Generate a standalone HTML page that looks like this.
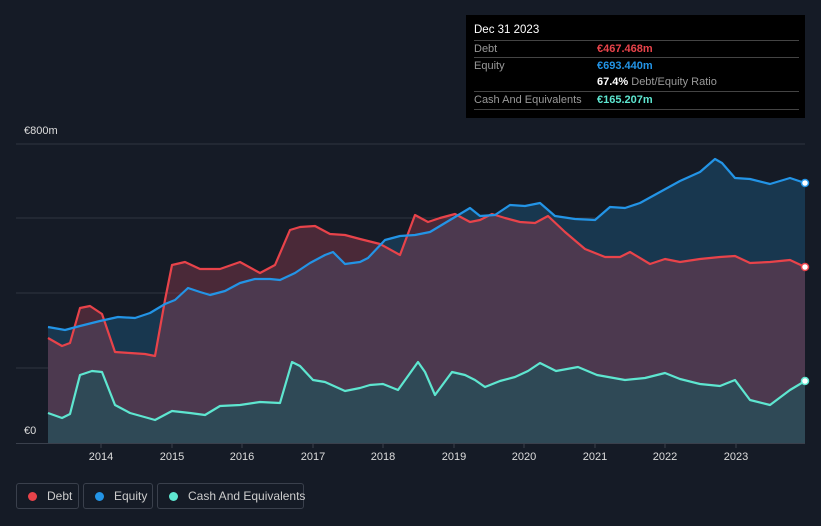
<!DOCTYPE html><html><head><meta charset="utf-8"><style>
body{margin:0;width:821px;height:526px;background:#151b26;font-family:"Liberation Sans",sans-serif;overflow:hidden;position:relative}
.t{position:absolute;left:466px;top:15px;width:339px;height:103px;background:#000;color:#fff;font-size:11px}
.r{position:absolute;left:8px;width:325px;border-top:1px solid #444;height:17px;line-height:17px}
.l{color:#999;position:absolute;left:0}.v{position:absolute;left:123px;font-weight:bold}
.ax{position:absolute;color:#ddd;font-size:11px}
.lg{position:absolute;top:483px;height:26px;border:1px solid #3a404c;border-radius:3px;color:#ccc;font-size:12px;line-height:24px;box-sizing:border-box;white-space:nowrap}
.lg i{display:inline-block;width:9px;height:9px;border-radius:50%;margin:0 10px 0 11px;vertical-align:-1px}
</style></head><body>
<div class="t">
<div style="position:absolute;left:8px;top:9px;font-size:11.5px">Dec 31 2023</div>
<div class="r" style="top:25px"><span class="l">Debt</span><span class="v" style="color:#e8434a">€467.468m</span></div>
<div class="r" style="top:42px"><span class="l">Equity</span><span class="v" style="color:#2394e6">€693.440m</span></div>
<div class="r" style="top:59px;border-top:none"><span class="v">67.4% <span style="color:#999;font-weight:normal">Debt/Equity Ratio</span></span></div>
<div class="r" style="top:76px"><span class="l">Cash And Equivalents</span><span class="v" style="color:#5ee6d0">€165.207m</span></div>
<div class="r" style="top:94px;height:0"></div>
</div>
<div class="ax" style="left:24px;top:125px">€800m</div>
<svg width="821" height="526" style="position:absolute;left:0;top:0">
<g stroke="#2e3440" stroke-width="1"><line x1="16" x2="805" y1="144" y2="144"/><line x1="16" x2="805" y1="218" y2="218"/><line x1="16" x2="805" y1="293" y2="293"/><line x1="16" x2="805" y1="368" y2="368"/></g>
<polygon fill="#18374f" points="48,443 48,327 65,330 80,326 100,321 118,317 135,318 150,313 165,304 175,300 188,288 200,292 210,295 225,291 240,283 255,279 270,279 280,280 295,273 310,263 325,255 333,252 345,264 360,262 368,258 385,240 400,236 415,235 430,232 445,223 460,214 470,208 480,216 495,215 510,205 525,206 540,203 555,216 575,219 595,220 610,207 625,208 640,203 660,192 680,181 700,172 715,159 722,163 735,178 750,179 770,184 790,178 805,183 805,443"/>
<polygon fill="rgba(140,60,80,0.45)" points="48,443 48,338 62,346 70,343 80,308 90,306 102,314 115,352 130,353 145,354 155,356 165,300 172,265 185,262 200,269 220,269 240,262 260,273 275,265 290,230 300,227 315,226 330,234 345,235 360,239 380,244 400,255 415,215 428,222 440,218 455,214 470,222 480,220 492,214 505,218 520,222 535,223 548,216 565,232 585,249 605,257 620,257 630,252 650,264 665,259 680,262 700,259 720,257 735,256 750,263 770,262 790,260 805,267 805,443"/>
<polygon fill="rgba(40,78,88,0.8)" points="48,443 48,413 62,418 70,414 80,375 92,371 102,372 115,405 130,413 148,418 155,420 172,411 190,413 205,415 220,406 240,405 260,402 280,403 292,362 300,366 313,380 325,382 345,391 360,388 370,385 383,384 398,390 418,362 425,372 435,395 452,372 465,375 475,380 485,387 500,381 515,377 528,371 540,363 556,371 578,367 597,375 625,380 645,378 665,373 680,379 700,384 720,386 735,380 750,400 770,405 790,390 805,381 805,443"/>
<g fill="none" stroke-width="2.2" stroke-linejoin="round">
<polyline stroke="#e8434a" points="48,338 62,346 70,343 80,308 90,306 102,314 115,352 130,353 145,354 155,356 165,300 172,265 185,262 200,269 220,269 240,262 260,273 275,265 290,230 300,227 315,226 330,234 345,235 360,239 380,244 400,255 415,215 428,222 440,218 455,214 470,222 480,220 492,214 505,218 520,222 535,223 548,216 565,232 585,249 605,257 620,257 630,252 650,264 665,259 680,262 700,259 720,257 735,256 750,263 770,262 790,260 805,267"/>
<polyline stroke="#2394e6" points="48,327 65,330 80,326 100,321 118,317 135,318 150,313 165,304 175,300 188,288 200,292 210,295 225,291 240,283 255,279 270,279 280,280 295,273 310,263 325,255 333,252 345,264 360,262 368,258 385,240 400,236 415,235 430,232 445,223 460,214 470,208 480,216 495,215 510,205 525,206 540,203 555,216 575,219 595,220 610,207 625,208 640,203 660,192 680,181 700,172 715,159 722,163 735,178 750,179 770,184 790,178 805,183"/>
<polyline stroke="#5ee6d0" points="48,413 62,418 70,414 80,375 92,371 102,372 115,405 130,413 148,418 155,420 172,411 190,413 205,415 220,406 240,405 260,402 280,403 292,362 300,366 313,380 325,382 345,391 360,388 370,385 383,384 398,390 418,362 425,372 435,395 452,372 465,375 475,380 485,387 500,381 515,377 528,371 540,363 556,371 578,367 597,375 625,380 645,378 665,373 680,379 700,384 720,386 735,380 750,400 770,405 790,390 805,381"/>
</g>
<circle cx="805" cy="267" r="3.5" fill="#fff" stroke="#e8434a" stroke-width="1.5"/>
<circle cx="805" cy="183" r="3.5" fill="#fff" stroke="#2394e6" stroke-width="1.5"/>
<circle cx="805" cy="381" r="3.5" fill="#fff" stroke="#5ee6d0" stroke-width="1.5"/>
<rect x="16" y="423" width="32" height="20" fill="#151b26"/>
<line x1="16" x2="805" y1="443.5" y2="443.5" stroke="#3a404c"/>
<g stroke="#3a404c"><line x1="101" x2="101" y1="443" y2="448"/><line x1="172" x2="172" y1="443" y2="448"/><line x1="242" x2="242" y1="443" y2="448"/><line x1="313" x2="313" y1="443" y2="448"/><line x1="383" x2="383" y1="443" y2="448"/><line x1="454" x2="454" y1="443" y2="448"/><line x1="524" x2="524" y1="443" y2="448"/><line x1="595" x2="595" y1="443" y2="448"/><line x1="665" x2="665" y1="443" y2="448"/><line x1="736" x2="736" y1="443" y2="448"/></g>
<g fill="#ddd" font-size="11" font-family="Liberation Sans" text-anchor="middle"><text x="101" y="460">2014</text><text x="172" y="460">2015</text><text x="242" y="460">2016</text><text x="313" y="460">2017</text><text x="383" y="460">2018</text><text x="454" y="460">2019</text><text x="524" y="460">2020</text><text x="595" y="460">2021</text><text x="665" y="460">2022</text><text x="736" y="460">2023</text></g>
</svg>
<div class="ax" style="left:24px;top:425px">€0</div>
<div class="lg" style="left:16px;width:63px"><i style="background:#e8434a"></i>Debt</div>
<div class="lg" style="left:83px;width:70px"><i style="background:#2394e6"></i>Equity</div>
<div class="lg" style="left:157px;width:147px"><i style="background:#5ee6d0"></i>Cash And Equivalents</div>
</body></html>
